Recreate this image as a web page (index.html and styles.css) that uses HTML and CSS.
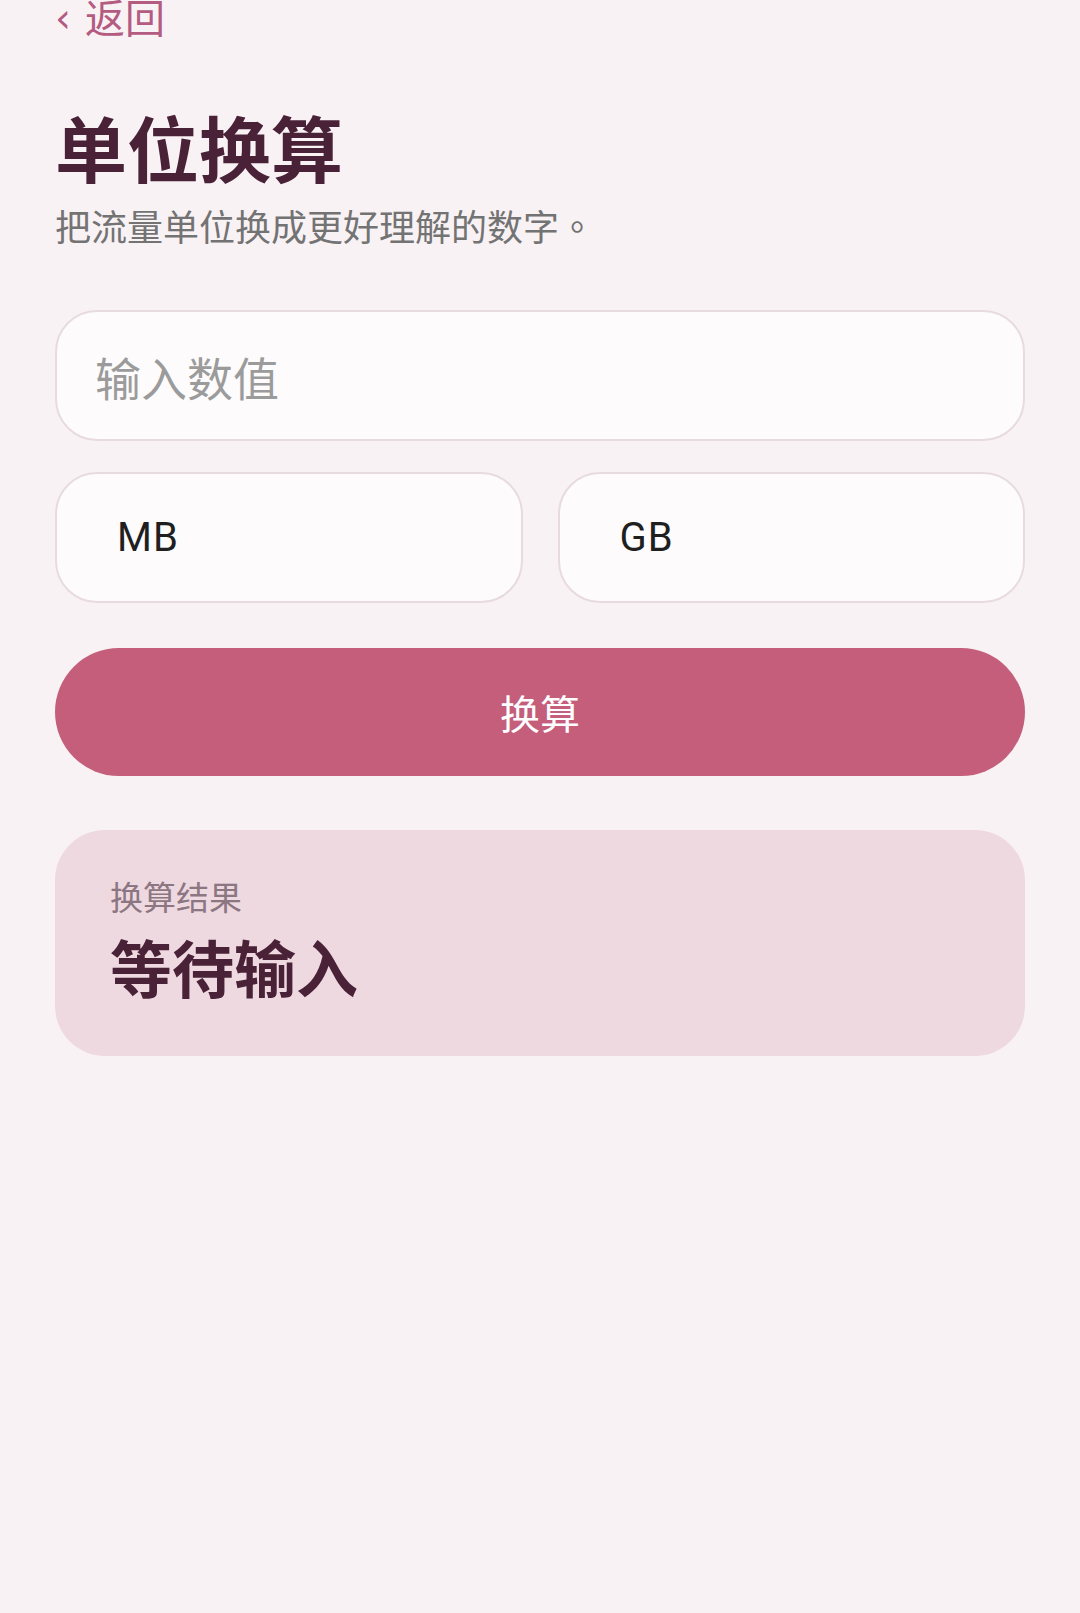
FILE: index.html
```html
<!DOCTYPE html>
<html lang="zh-CN">
<head>
<meta charset="utf-8">
<title>单位换算</title>
<link rel="stylesheet" href="styles.css">
</head>
<body>
<div class="page">
  <a class="back" href="#"><span class="chev">‹</span><span class="back-text">返回</span></a>
  <h1 class="title">单位换算</h1>
  <p class="subtitle">把流量单位换成更好理解的数字<span class="punct" lang="zh-TW">。</span></p>
  <div class="field field-full"><span class="placeholder">输入数值</span></div>
  <div class="units">
    <div class="field unit"><span class="unit-text">MB</span></div>
    <div class="field unit"><span class="unit-text">GB</span></div>
  </div>
  <button class="convert">换算</button>
  <section class="result">
    <div class="result-label">换算结果</div>
    <div class="result-value">等待输入</div>
  </section>
</div>
</body>
</html>
```
FILE: styles.css
```css
html, body {
  margin: 0;
  padding: 0;
  background: #f9f2f5;
}
body {
  font-family: "Noto Sans CJK SC", "Noto Sans", sans-serif;
  width: 1080px;
  min-height: 1613px;
}
.page {
  padding: 0 55px 0 55px;
  display: flex;
  flex-direction: column;
}
.back {
  display: flex;
  align-items: center;
  gap: 14px;
  color: #b35b80;
  text-decoration: none;
  font-size: 40px;
  line-height: 40px;
  margin-top: -4px;
  height: 40px;
}
.chev {
  font-family: "DejaVu Sans", sans-serif;
  font-size: 40px;
  line-height: 40px;
  margin-top: 4px;
}
.title {
  margin: 70px 0 0 0;
  font-size: 72px;
  line-height: 80px;
  font-weight: 700;
  color: #4a2237;
}
.subtitle {
  margin: 17px 0 0 0;
  font-size: 36px;
  line-height: 44px;
  color: #737373;
}
.punct {
  font-family: "Noto Sans CJK TC", sans-serif;
}
.field {
  box-sizing: border-box;
  background: #fdfbfc;
  border: 2px solid #e7dbe0;
  border-radius: 42px;
  display: flex;
  align-items: center;
}
.field-full {
  margin-top: 63px;
  height: 131px;
  padding-left: 38px;
}
.placeholder {
  font-size: 46px;
  color: #9b9b9b;
}
.units {
  margin-top: 31px;
  display: grid;
  grid-template-columns: 1fr 1fr;
  gap: 35px;
}
.unit {
  height: 131px;
  padding-left: 60px;
}
.unit-text {
  font-family: Roboto, "Noto Sans", sans-serif;
  font-size: 40px;
  letter-spacing: 1px;
  color: #1f1f1f;
}
.convert {
  margin-top: 45px;
  height: 128px;
  border: none;
  border-radius: 64px;
  background: #c45e7b;
  color: #ffffff;
  font-family: "Noto Sans CJK SC", sans-serif;
  font-size: 40px;
  padding: 0;
}
.result {
  margin-top: 54px;
  height: 226px;
  box-sizing: border-box;
  background: #eed9e1;
  border-radius: 50px;
  padding: 46px 55px 0 55px;
}
.result-label {
  font-size: 33px;
  line-height: 40px;
  color: #8c7682;
}
.result-value {
  margin-top: 14px;
  font-size: 62px;
  line-height: 72px;
  font-weight: 700;
  color: #4a2237;
}
```
